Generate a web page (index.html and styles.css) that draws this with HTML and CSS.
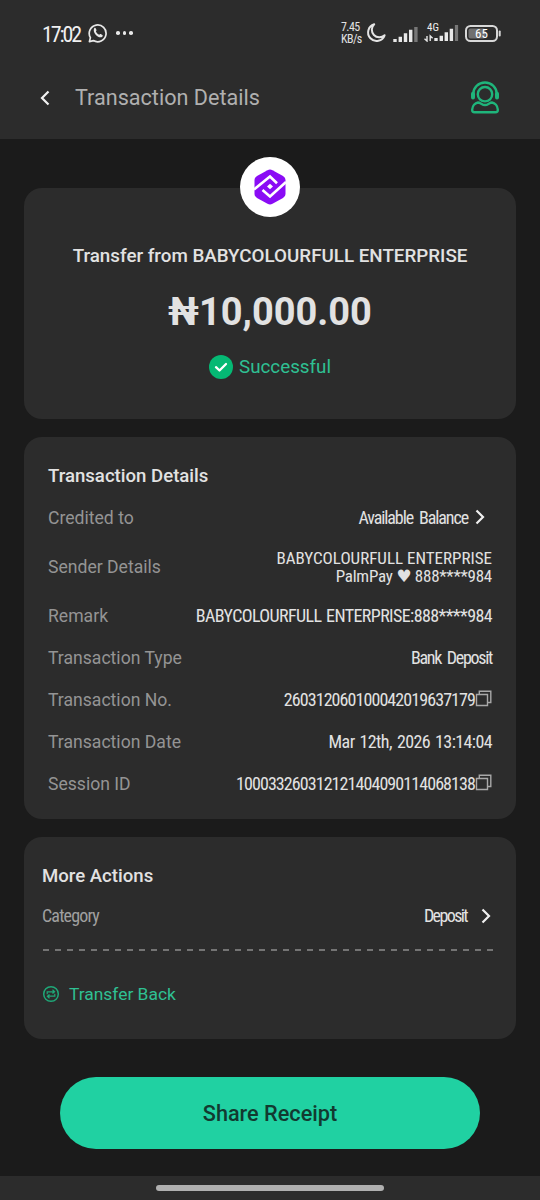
FILE: index.html
```html
<!DOCTYPE html>
<html lang="en">
<head>
    <meta charset="UTF-8">
    <meta name="viewport" content="width=device-width, initial-scale=1.0">
    <title>Transaction Details</title>
    <link rel="stylesheet" href="styles.css">
</head>
<body>

<div class="status-bar">
    <span class="clock">17:02</span>
    <svg class="whatsapp" width="20" height="20" viewBox="0 0 20 20">
        <path d="M2.4 14.6A8.4 8.4 0 1 1 5.4 17.6L1.4 18.6Z" fill="none" stroke="#e8e8e8" stroke-width="1.7" stroke-linejoin="round"/>
        <path d="M6.200 5.200c.6-.6 1.300-.4 1.600.2l.7 1.700c.2.5-.5 1-.6 1.400.6 1.400 1.900 2.700 3.400 3.300.4 0 .9-.9 1.400-.7l1.700.8c.5.3.4 1.300-.1 1.800-3.200 2.700-10.500-3.800-8.100-8.500z" fill="#e8e8e8"/>
    </svg>
    <span class="dots"><i></i><i></i><i></i></span>
    <div class="status-right">
        <div class="speed"><span>7.45</span><span>KB/s</span></div>
        <svg class="moon" width="20" height="20" viewBox="0 0 20 20">
            <path d="M8.200 1.300A8.500 8.500 0 1 0 18.600 12.300A7.200 7.200 0 0 1 8.200 1.300Z" fill="none" stroke="#e4e4e4" stroke-width="2" stroke-linejoin="round"/>
        </svg>
        <svg class="signal" width="25" height="17" viewBox="0 0 25 17">
            <path d="M2 13V16M7.300 10.700V16M12.500 7.200V16M17.700 3.700V16" stroke="#e8e8e8" stroke-width="3.400"/>
            <path d="M22.900 1V16" stroke="#777" stroke-width="3.400"/>
        </svg>
        <svg class="signal-4g" width="35" height="20" viewBox="0 0 35 20">
            <text x="3" y="9" class="network">4G</text>
            <path d="M12 16V19M17.300 13.700V19M22.300 10.200V19M27.400 6.700V19" stroke="#e8e8e8" stroke-width="3.400"/>
            <path d="M32.500 3V19" stroke="#777" stroke-width="3.200"/>
            <path d="M3 14V19L0.500 16.800M6.200 19V14L8.600 16.300" fill="none" stroke="#e8e8e8" stroke-width="1.400"/>
        </svg>
        <svg class="battery" width="36" height="17" viewBox="0 0 36 17">
            <rect x="1" y="1" width="31" height="15" rx="4.500" fill="none" stroke="#d8d8d8" stroke-width="2"/>
            <rect x="3.500" y="3.500" width="17" height="10" rx="2" fill="#707070"/>
            <path d="M34.700 6.500V10.500" stroke="#d8d8d8" stroke-width="2" stroke-linecap="round"/>
            <text x="16.500" y="13.200" text-anchor="middle" class="level">65</text>
        </svg>
    </div>
</div>

<div class="header">
    <svg class="back" width="10" height="16" viewBox="0 0 10 16">
        <path d="M8.500 1.500L2 8L8.500 14.500" fill="none" stroke="#f2f2f2" stroke-width="2.200"/>
    </svg>
    <h1>Transaction Details</h1>
    <svg class="support" width="30" height="34" viewBox="0 0 30 34" fill="none" stroke="#1fb57b" stroke-width="2.400">
        <circle cx="15" cy="13.200" r="7.200"/>
        <path d="M3.200 14.500V13A11.800 11.500 0 0 1 26.800 13V14.500"/>
        <path d="M3 12.800V16.500M27 12.800V16.500" stroke-width="4" stroke-linecap="round"/>
        <path d="M8 21.500C10.500 21.500 12 24 15 24C18 24 19.500 21.500 22 21.500C25 22 27.500 25 27.800 28.500C28 30.500 27 31.300 25.500 31.300H4.500C3 31.300 2 30.500 2.200 28.500C2.500 25 5 22 8 21.500Z"/>
    </svg>
</div>

<div class="container">
    <div class="card summary">
        <div class="bank-logo">
            <svg width="34" height="36" viewBox="0 0 34 36">
                <path d="M14.500 1.200Q17 0 19.500 1.200L30 7Q32.500 8.500 32.500 11V25Q32.500 27.500 30 29L19.500 34.800Q17 36 14.500 34.800L4 29Q1.500 27.500 1.500 25V11Q1.500 8.500 4 7Z" fill="#8a0cf5"/>
                <path d="M1 20.500L17 7.500L24 14.300M33 13L17 27.500L9.500 21" fill="none" stroke="#fff" stroke-width="2.600"/>
                <path d="M17 14.800L20 17.500L17 20.200L14 17.500Z" fill="#fff"/>
            </svg>
        </div>
        <div class="from">Transfer from BABYCOLOURFULL ENTERPRISE</div>
        <div class="amount">₦10,000.00</div>
        <div class="state">
            <svg width="24" height="24" viewBox="0 0 24 24">
                <circle cx="12" cy="12" r="12" fill="#05b974"/>
                <path d="M7 12.200L10.500 15.500L17 9" fill="none" stroke="#fff" stroke-width="2.300" stroke-linecap="round" stroke-linejoin="round"/>
            </svg>
            <span>Successful</span>
        </div>
    </div>

    <div class="card details">
        <h2>Transaction Details</h2>
        <div class="row">
            <span class="label">Credited to</span>
            <span class="value balance">Available Balance</span>
            <svg class="chevron" width="10" height="16" viewBox="0 0 10 16"><path d="M1.500 1.500L8 8L1.500 14.500"/></svg>
        </div>
        <div class="row sender">
            <span class="label">Sender Details</span>
            <div class="value sender-value">
                <div>BABYCOLOURFULL ENTERPRISE</div>
                <div class="sender-bank">PalmPay ♥ 888****984</div>
            </div>
        </div>
        <div class="row">
            <span class="label">Remark</span>
            <span class="value remark">BABYCOLOURFULL ENTERPRISE:888****984</span>
        </div>
        <div class="row">
            <span class="label">Transaction Type</span>
            <span class="value type">Bank Deposit</span>
        </div>
        <div class="row">
            <span class="label">Transaction No.</span>
            <span class="value number">260312060100042019637179</span>
            <svg class="copy" width="17" height="17" viewBox="0 0 17 17"><path d="M1.500 4.500H12.500V15.500H1.500ZM4.300 4.500V1.200H15.800V12.500H12.500"/></svg>
        </div>
        <div class="row">
            <span class="label">Transaction Date</span>
            <span class="value date">Mar 12th, 2026 13:14:04</span>
        </div>
        <div class="row">
            <span class="label">Session ID</span>
            <span class="value number">100033260312121404090114068138</span>
            <svg class="copy" width="17" height="17" viewBox="0 0 17 17"><path d="M1.500 4.500H12.500V15.500H1.500ZM4.300 4.500V1.200H15.800V12.500H12.500"/></svg>
        </div>
    </div>

    <div class="card actions">
        <h2>More Actions</h2>
        <div class="row">
            <span class="category">Category</span>
            <span class="value deposit">Deposit</span>
            <svg class="chevron" width="10" height="16" viewBox="0 0 10 16"><path d="M1.500 1.500L8 8L1.500 14.500"/></svg>
        </div>
        <div class="divider"></div>
        <div class="transfer-back">
            <svg width="18" height="18" viewBox="0 0 18 18" fill="none" stroke="#1fa878" stroke-width="1.500">
                <circle cx="9" cy="9" r="7.300"/>
                <path d="M5.200 9.200V6.800H12M10.500 4.800L12.600 6.800L10.500 8.500M12.800 8.800V11.200H6M7.500 9.500L5.400 11.200L7.500 13.200" stroke-width="1.200"/>
            </svg>
            <span>Transfer Back</span>
        </div>
    </div>

    <button class="share-btn">Share Receipt</button>
</div>

<div class="nav-bar"><span></span></div>

</body>
</html>
```
FILE: styles.css
```css
* {
    box-sizing: border-box;
}
body {
    margin: 0;
    height: 1200px;
    display: flex;
    flex-direction: column;
    font-family: Roboto, sans-serif;
    background-color: #1b1b1b;
    color: #e2e2e2;
}
h1, h2 {
    margin: 0;
}
svg {
    flex: none;
}
.status-bar {
    height: 66px;
    padding: 0 39px 0 42px;
    display: flex;
    align-items: center;
    background-color: #2c2c2c;
}
.clock, .value, .category, .speed, .network, .level {
    font-family: "Liberation Sans Narrow", "Roboto Condensed", Roboto, sans-serif;
}
.clock {
    width: 46px;
    font-size: 22px;
    letter-spacing: -2.1px;
    color: #f0f0f0;
    padding-top: 2px;
}
.dots {
    display: flex;
    gap: 3px;
    margin-left: 8px;
}
.dots i {
    width: 3.5px;
    height: 3.5px;
    border-radius: 50%;
    background-color: #e8e8e8;
}
.status-right {
    display: flex;
    align-items: center;
    margin-left: auto;
}
.speed {
    display: flex;
    flex-direction: column;
    width: 20px;
    margin-right: 5px;
    font-size: 12px;
    line-height: 12px;
    letter-spacing: -0.6px;
}
.signal {
    margin: 2px 6px 0 7px;
}
.signal-4g {
    margin: 0 6px 2px 0;
}
.network {
    font-size: 11px;
    fill: #eee;
}
.level {
    font-size: 13px;
    fill: #fff;
}
.header {
    height: 73px;
    padding: 0 40px 10px;
    display: flex;
    align-items: center;
    background-color: #2c2c2c;
}
.header h1 {
    flex: 1;
    margin-left: 25px;
    font-size: 21.6px;
    font-weight: 400;
    color: #b0b0b0;
}
.container {
    flex: 1;
    padding: 49px 24px 0;
}
.card {
    margin-bottom: 18px;
    background-color: #2c2c2c;
    border-radius: 18px;
}
.summary {
    height: 231px;
    display: flex;
    flex-direction: column;
    align-items: center;
}
.bank-logo {
    width: 60px;
    height: 60px;
    margin-top: -31px;
    display: flex;
    align-items: center;
    justify-content: center;
    background-color: #fff;
    border-radius: 50%;
}
.from {
    margin-top: 27px;
    font-size: 18.8px;
    line-height: 24px;
    font-weight: 500;
}
.amount {
    margin-top: 20px;
    font-size: 38px;
    line-height: 48px;
    font-weight: 700;
}
.state {
    display: flex;
    align-items: center;
    gap: 6px;
    margin-top: 18px;
    font-size: 18.8px;
    line-height: 24px;
    color: #2fc093;
}
.state span {
    padding-top: 1px;
}
.details {
    height: 382px;
    padding: 17px 24px 14px;
}
h2 {
    height: 42px;
    padding-top: 1px;
    font-size: 18.6px;
    line-height: 42px;
    font-weight: 500;
}
.row {
    height: 42px;
    display: flex;
    align-items: center;
}
.label {
    padding-top: 2px;
    font-size: 17.6px;
    color: #949494;
}
.value {
    margin-left: auto;
    padding-top: 2px;
    font-size: 18px;
    line-height: 18px;
    text-align: right;
    white-space: nowrap;
}
.balance {
    letter-spacing: -1.1px;
    word-spacing: 3px;
}
.remark {
    letter-spacing: -0.6px;
    word-spacing: 1px;
}
.sender-value {
    font-family: "Roboto Condensed", "DejaVu Sans", sans-serif;
    font-size: 17px;
}
.sender-bank {
    letter-spacing: -0.25px;
}
.type {
    letter-spacing: -1.3px;
    word-spacing: 3px;
}
.number {
    letter-spacing: -0.92px;
}
.date {
    letter-spacing: -0.6px;
    word-spacing: 1.5px;
}
.chevron {
    margin: 0 7px 0 7px;
    fill: none;
    stroke: #f0f0f0;
    stroke-width: 2.2;
}
.copy {
    margin-bottom: 1px;
    fill: none;
    stroke: #a8a8a8;
    stroke-width: 1.4;
}
.sender {
    height: 56px;
}
.actions {
    height: 202px;
    padding: 17px 18px;
}
.actions .row {
    height: 39px;
}
.category {
    font-size: 18px;
    letter-spacing: -0.85px;
    color: #a0a0a0;
}
.deposit {
    padding-top: 0;
    letter-spacing: -1.6px;
}
.actions .chevron {
    margin: 0 7px 0 14px;
}
.divider {
    height: 2px;
    margin: 14px 0 0 1px;
    background: repeating-linear-gradient(to right, #747474 0 6px, transparent 6px 12px);
}
.transfer-back {
    display: flex;
    align-items: center;
    gap: 9px;
    margin-top: 31px;
    font-size: 17.4px;
    line-height: 24px;
    color: #2fc093;
}
.share-btn {
    display: block;
    width: 420px;
    height: 72px;
    margin: 38px auto 0;
    border: none;
    border-radius: 36px;
    background-color: #20d1a2;
    color: #123a30;
    font-family: Roboto, sans-serif;
    font-size: 21.7px;
    font-weight: 500;
}
.nav-bar {
    height: 24px;
    padding-top: 9px;
    background-color: #2c2c2c;
}
.nav-bar span {
    display: block;
    width: 228px;
    height: 6px;
    margin: 0 auto;
    border-radius: 3px;
    background-color: #b0b0b0;
}
```
